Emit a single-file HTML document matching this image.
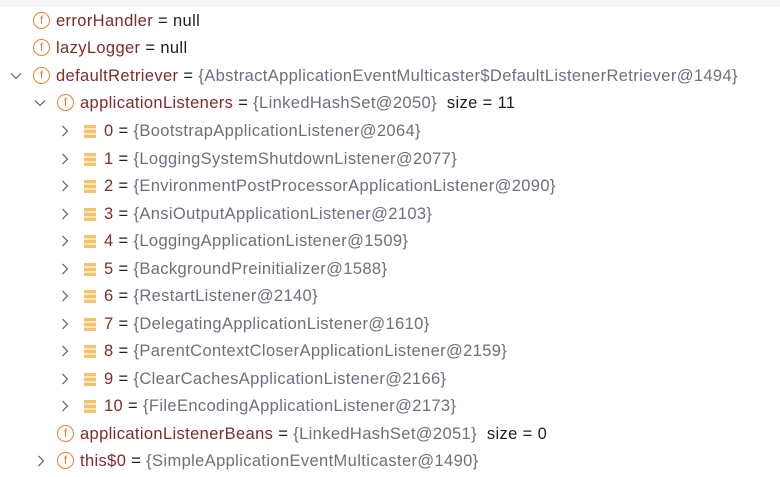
<!DOCTYPE html>
<html><head><style>
body{margin:0;width:780px;height:477px;background:#fff;overflow:hidden;font-family:"Liberation Sans",sans-serif;font-size:16.5px;letter-spacing:0.37px;position:relative}
.top{position:absolute;left:0;top:0;width:780px;height:5px;background:#f7f8fa;border-bottom:1px solid #ebecf0}
.r{position:absolute;height:22px;line-height:22px;white-space:nowrap;color:#1e1f22}
.n{color:#7f2b2b}.v{color:#6c707e}
.f{position:absolute;width:15px;height:15px;border:1.6px solid #e8812f;border-radius:50%;color:#e8812f;font-size:12px;letter-spacing:0;line-height:15px;text-align:center;top:2px}
.l{position:absolute;width:12px;top:5px;height:13px;background:repeating-linear-gradient(#f3c26b 0 3px,#fbe6bd 3px 5px)}
.c{position:absolute;top:0}
</style></head><body>
<div class="top"></div>
<div class="r" style="top:10px;left:0"><span class="f" style="left:33px">f</span><span style="position:absolute;left:56px"><span class="n">errorHandler</span> = null</span></div>
<div class="r" style="top:37px;left:0"><span class="f" style="left:33px">f</span><span style="position:absolute;left:56px"><span class="n">lazyLogger</span> = null</span></div>
<div class="r" style="top:65px;left:0"><svg class="c" style="left:10px;top:7px" width="12" height="8"><path d="M1 1.5l5 5 5-5" fill="none" stroke="#6c707e" stroke-width="1.3"/></svg><span class="f" style="left:33px">f</span><span style="position:absolute;left:56px"><span class="n">defaultRetriever</span> = <span class="v">{AbstractApplicationEventMulticaster$DefaultListenerRetriever@1494}</span></span></div>
<div class="r" style="top:92px;left:0"><svg class="c" style="left:34px;top:7px" width="12" height="8"><path d="M1 1.5l5 5 5-5" fill="none" stroke="#6c707e" stroke-width="1.3"/></svg><span class="f" style="left:57px">f</span><span style="position:absolute;left:80px"><span class="n">applicationListeners</span> = <span class="v">{LinkedHashSet@2050}</span>&nbsp; size = 11</span></div>
<div id="items"></div>
<div class="r" style="top:423px;left:0"><span class="f" style="left:57px">f</span><span style="position:absolute;left:80px"><span class="n">applicationListenerBeans</span> = <span class="v">{LinkedHashSet@2051}</span>&nbsp; size = 0</span></div>
<div class="r" style="top:450px;left:0"><svg class="c" style="left:37px;top:5px" width="8" height="12"><path d="M1.5 1l5 5-5 5" fill="none" stroke="#6c707e" stroke-width="1.3"/></svg><span class="f" style="left:57px">f</span><span style="position:absolute;left:80px"><span class="n">this$0</span> = <span class="v">{SimpleApplicationEventMulticaster@1490}</span></span></div>
<script>
var d=["BootstrapApplicationListener@2064","LoggingSystemShutdownListener@2077","EnvironmentPostProcessorApplicationListener@2090","AnsiOutputApplicationListener@2103","LoggingApplicationListener@1509","BackgroundPreinitializer@1588","RestartListener@2140","DelegatingApplicationListener@1610","ParentContextCloserApplicationListener@2159","ClearCachesApplicationListener@2166","FileEncodingApplicationListener@2173"];
var h="";d.forEach(function(s,i){var t=120+i*27.5;h+='<div class="r" style="top:'+t+'px;left:0"><svg class="c" style="left:61px;top:5px" width="8" height="12"><path d="M1.5 1l5 5-5 5" fill="none" stroke="#6c707e" stroke-width="1.3"/></svg><span class="l" style="left:84px"></span><span style="position:absolute;left:104px"><span class="n">'+i+'</span> = <span class="v">{'+s+'}</span></span></div>';});
document.getElementById("items").innerHTML=h;
</script>
</body></html>
